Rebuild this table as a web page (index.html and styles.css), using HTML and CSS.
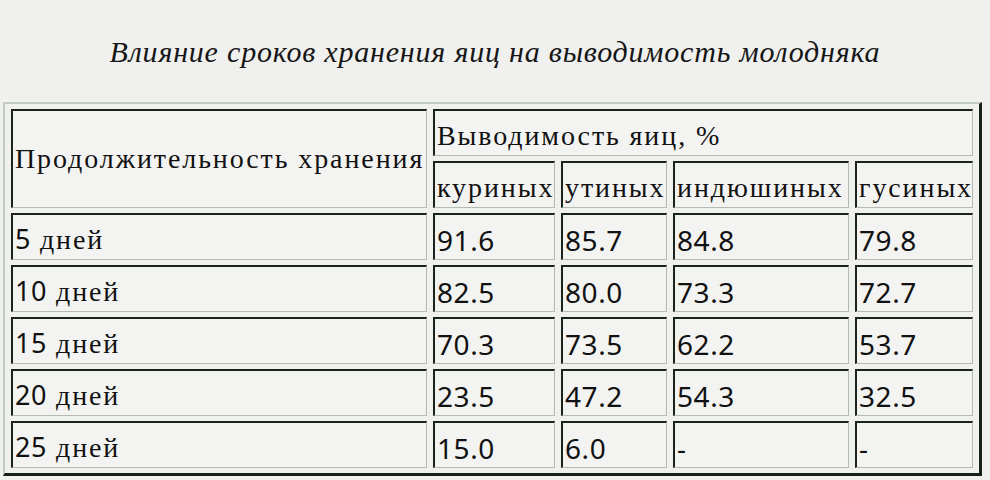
FILE: index.html
```html
<!DOCTYPE html>
<html lang="ru">
<head>
<meta charset="utf-8">
<title>Влияние сроков хранения яиц</title>
<link rel="stylesheet" href="styles.css">
</head>
<body>
<div class="page">
  <h1 class="title">Влияние сроков хранения яиц на выводимость молодняка</h1>
  <table class="grid">
    <colgroup>
      <col class="c-period">
      <col class="c-chick">
      <col class="c-duck">
      <col class="c-turkey">
      <col class="c-goose">
    </colgroup>
    <tr>
      <td class="head head-main" rowspan="2">Продолжительность хранения</td>
      <td class="head" colspan="4">Выводимость яиц, %</td>
    </tr>
    <tr>
      <td class="head">куриных</td>
      <td class="head">утиных</td>
      <td class="head">индюшиных</td>
      <td class="head">гусиных</td>
    </tr>
    <tr>
      <td class="period"><span class="num">5</span> дней</td>
      <td class="num">91.6</td><td class="num">85.7</td><td class="num">84.8</td><td class="num">79.8</td>
    </tr>
    <tr>
      <td class="period"><span class="num">10</span> дней</td>
      <td class="num">82.5</td><td class="num">80.0</td><td class="num">73.3</td><td class="num">72.7</td>
    </tr>
    <tr>
      <td class="period"><span class="num">15</span> дней</td>
      <td class="num">70.3</td><td class="num">73.5</td><td class="num">62.2</td><td class="num">53.7</td>
    </tr>
    <tr>
      <td class="period"><span class="num">20</span> дней</td>
      <td class="num">23.5</td><td class="num">47.2</td><td class="num">54.3</td><td class="num">32.5</td>
    </tr>
    <tr>
      <td class="period"><span class="num">25</span> дней</td>
      <td class="num">15.0</td><td class="num">6.0</td><td class="num">-</td><td class="num">-</td>
    </tr>
  </table>
</div>
</body>
</html>
```
FILE: styles.css
```css
html, body {
  margin: 0;
  padding: 0;
  background: #f0f1ef;
}

.page {
  width: 990px;
  height: 480px;
  box-sizing: border-box;
  padding: 36px 0 0 3px;
  overflow: hidden;
  color: #111;
}

.title {
  margin: 0 0 34px 0;
  padding-right: 3px;
  text-align: center;
  font-family: "Liberation Serif", serif;
  font-style: italic;
  font-weight: normal;
  font-size: 30px;
  line-height: 32px;
  letter-spacing: 0.8px;
  color: #161616;
}

.grid {
  width: 979px;
  table-layout: fixed;
  border-collapse: separate;
  border-spacing: 6px 5px;
  border-style: solid;
  border-width: 2px 3px 3px 2px;
  border-color: #c3ccc3 #162016 #162016 #c3ccc3;
}

.c-period { width: 416px; }
.c-chick { width: 122px; }
.c-duck { width: 106px; }
.c-turkey { width: 176px; }
.c-goose { width: 118px; }

.grid td {
  box-sizing: border-box;
  height: 47px;
  padding: 5px 1px 0 2px;
  border-style: solid;
  border-width: 2px 1px 1px 2px;
  border-color: #1b241b #b3bcb3 #b3bcb3 #1b241b;
  background: #f3f4f2;
  vertical-align: middle;
  white-space: nowrap;
  overflow: hidden;
  font-family: "Liberation Serif", serif;
  font-size: 28px;
  line-height: 30px;
  letter-spacing: 1.9px;
}

.grid td.head {
  padding-top: 5px;
}

.grid td.head-main {
  padding-top: 0;
}

.num {
  font-family: "Noto Sans", sans-serif;
  font-size: 27px;
  letter-spacing: 0.6px;
}

.grid td.num {
  font-family: "Noto Sans", sans-serif;
  letter-spacing: 0.6px;
}
```
